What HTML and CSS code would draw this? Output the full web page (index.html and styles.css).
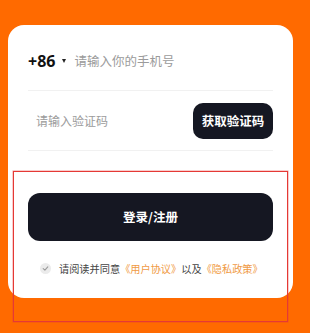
FILE: index.html
```html
<!DOCTYPE html>
<html lang="zh-CN">
<head>
    <meta charset="UTF-8">
    <title>登录</title>
    <link rel="stylesheet" href="styles.css">
</head>
<body>
<div class="page">
    <div class="card">
        <div class="row phone-row">
            <span class="area">+86</span>
            <span class="caret"></span>
            <span class="placeholder">请输入你的手机号</span>
        </div>
        <div class="row code-row">
            <span class="placeholder code">请输入验证码</span>
            <span class="code-btn">获取验证码</span>
        </div>
        <div class="login-btn">登录/注册</div>
        <div class="agree">
            <svg class="check" width="11" height="11" viewBox="0 0 11 11">
                <circle cx="5.5" cy="5.5" r="5.5" fill="#ebebeb"/>
                <polyline points="3.2,5.7 4.9,7.2 7.8,3.9" fill="none" stroke="#9a9a9a" stroke-width="1.1" stroke-linecap="round" stroke-linejoin="round"/>
            </svg>
            <span>请阅读并同意<a class="link">《用户协议》</a>以及<a class="link">《隐私政策》</a></span>
        </div>
    </div>
    <div class="mark"></div>
</div>
</body>
</html>
```

FILE: styles.css
```css
*{
    margin: 0;
    padding: 0;
    box-sizing: border-box;
}
body{
    background: #ff6a00;
    font-family: "Noto Sans CJK SC", "Noto Sans", sans-serif;
}
.page{
    position: relative;
    width: 310px;
    height: 333px;
    padding: 25px 17px 0 8px;
}
.card{
    background: #fff;
    border-radius: 16px;
    height: 273px;
    padding: 6px 20px 0 20px;
}
.row{
    display: flex;
    align-items: center;
    height: 60px;
    border-bottom: 1px solid #f1f1f1;
}
.area{
    font-size: 16px;
    font-weight: bold;
    color: #111;
    font-family: "Noto Sans", "Noto Sans CJK SC", sans-serif;
}
.caret{
    width: 0;
    height: 0;
    border-left: 2.5px solid transparent;
    border-right: 2.5px solid transparent;
    border-top: 4px solid #222;
    margin: 0 8px 0 7px;
}
.placeholder{
    font-size: 12.5px;
    color: #9b9b9b;
}
.code{
    padding-left: 8px;
    font-size: 12px;
    flex: 1;
}
.code-btn{
    width: 80px;
    height: 36px;
    line-height: 36px;
    text-align: center;
    background: #151722;
    color: #fff;
    font-size: 12.5px;
    font-weight: bold;
    border-radius: 10px;
}
.login-btn{
    margin-top: 42px;
    height: 48px;
    line-height: 48px;
    text-align: center;
    background: #151722;
    color: #fff;
    font-size: 12.5px;
    font-weight: bold;
    border-radius: 12px;
}
.agree{
    display: flex;
    align-items: center;
    margin-top: 20px;
    padding-left: 12px;
    font-size: 10.2px;
    color: #444;
}
.check{
    margin-right: 8px;
}
.link{
    color: #f09a45;
}
.mark{
    position: absolute;
    left: 13px;
    top: 171px;
    width: 275px;
    height: 151px;
    border: 1px solid #e53935;
    box-shadow: 0 0 0 0.5px rgba(229, 57, 53, 0.5);
}
```
